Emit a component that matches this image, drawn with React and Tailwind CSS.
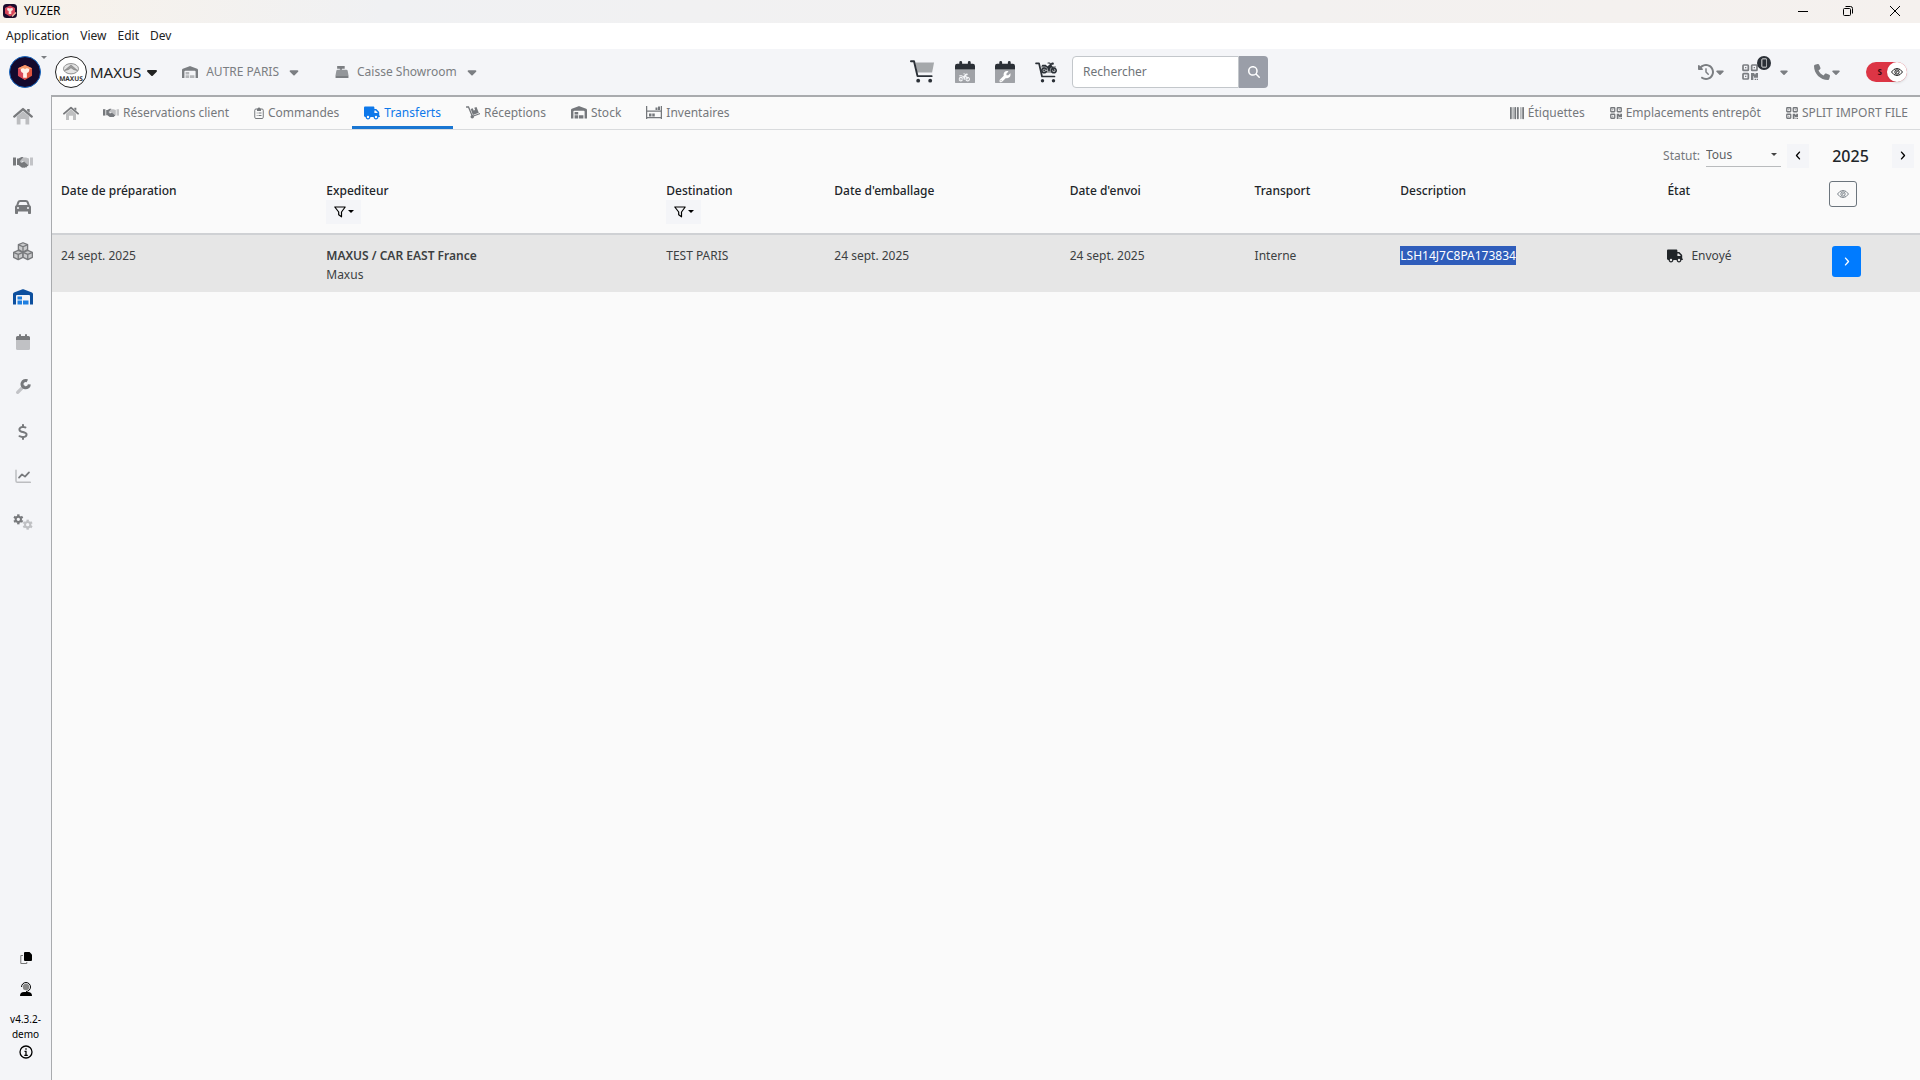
import React, { useState } from 'react';
import {
  FaBarcode,
  FaCar,
  FaCaretDown,
  FaClockRotateLeft,
  FaDollarSign,
  FaMagnifyingGlass,
  FaMotorcycle,
  FaPhone,
  FaTruck,
  FaWrench,
} from 'react-icons/fa6';

/* ---------- Icons ---------- */

function HomeIcon({ className }) {
  return (
    <svg className={className} viewBox="0 0 24 22" fill="none">
      <path d="M4.5 11.5 12 5l7.5 6.5V21H15v-6.5H9V21H4.5z" fill="currentColor" opacity=".45" />
      <path d="M1.5 11.5 12 2.5l10.5 9" stroke="currentColor" strokeWidth="2.8" strokeLinecap="round" strokeLinejoin="round" />
      <path d="M17 2.5h3V7l-3-2.5z" fill="currentColor" />
    </svg>
  );
}

function HandshakeIcon({ className }) {
  return (
    <svg className={className} viewBox="0 0 40 24">
      <path d="M0 3h6v16H0z" fill="currentColor" />
      <path d="M34 3h6v16h-6z" fill="currentColor" opacity=".4" />
      <path d="M18 3h8l6 2v14h-3L20 10l-5 3-3-2z" fill="currentColor" opacity=".45" />
      <path d="M8 5h3l6-3h4l-7 8c1 4 5 4 8 1l8 7c1 2-1 3-2 2 0 3-2 4-3 2-1 2-3 2-4 1-2 1-4 0-5-1l-5-4H8z" fill="currentColor" />
    </svg>
  );
}

function WarehouseIcon({ className, inner = 'currentColor' }) {
  return (
    <svg className={className} viewBox="0 0 40 32">
      <path d="M0 31V10q0-2 2-3L19 .5q1-.5 2 0L38 7q2 1 2 3v21h-6V14q0-2-2-2H8q-2 0-2 2v17z" fill="currentColor" />
      <path d="M9 15h9v6H9zM9 23h9v8H9zM20 23h11v8H20z" fill={inner} />
    </svg>
  );
}

function CubesIcon({ className }) {
  const cube = 'M0-6 6-3.5V3L0 6-6 3v-6.5z';
  const edge = 'M-5.5-3.2 0-.8l5.5-2.4M0-.8V5.5';
  return (
    <svg className={className} viewBox="0 0 26 24" stroke="currentColor" strokeWidth="1.7" strokeLinejoin="round">
      {[[13, 7], [6.8, 17], [19.2, 17]].map(([x, y]) => (
        <g key={x} transform={`translate(${x} ${y})`}>
          <path d={cube} fill="#c9cacc" />
          <path d={edge} fill="none" />
        </g>
      ))}
    </svg>
  );
}

function CalendarIcon({ className, children }) {
  return (
    <svg className={className} viewBox="0 0 28 32">
      <path d="M0 12h28v17q0 3-3 3H3q-3 0-3-3z" fill="currentColor" opacity=".42" />
      <path d="M0 12V7q0-3 3-3h3V2q0-2 2-2t2 2v2h8V2q0-2 2-2t2 2v2h3q3 0 3 3v5z" fill="currentColor" />
      {children}
    </svg>
  );
}

function ChartIcon({ className }) {
  return (
    <svg className={className} viewBox="0 0 24 22" fill="none" strokeLinecap="round" strokeLinejoin="round">
      <path d="M1.5 2v16q0 2 2 2H23" stroke="currentColor" strokeWidth="2.2" opacity=".45" />
      <path d="m6 13 4.5-5 4.5 3.5L21 5" stroke="currentColor" strokeWidth="2.6" />
    </svg>
  );
}

function Gear({ x, y, opacity = 1 }) {
  return (
    <g transform={`translate(${x} ${y})`} opacity={opacity} stroke="currentColor" fill="none">
      <circle r="4" strokeWidth="3" />
      {[0, 60, 120, 180, 240, 300].map((a) => (
        <path key={a} d="M0-4.8V-7.5" strokeWidth="3.6" transform={`rotate(${a})`} />
      ))}
    </g>
  );
}

function GearsIcon({ className }) {
  return (
    <svg className={className} viewBox="0 0 30 24">
      <Gear x={8} y={8} />
      <Gear x={22} y={16} opacity={0.42} />
    </svg>
  );
}

function DuoWrenchIcon({ className }) {
  return (
    <svg className={className} viewBox="0 0 24 24" fill="none" stroke="currentColor">
      <path d="m13 11-9 9" strokeWidth="5" strokeLinecap="round" opacity=".4" />
      <path d="M18.5 2.8a5.5 5.5 0 1 0 3 5.2" strokeWidth="4.5" />
    </svg>
  );
}

function ClipboardIcon({ className }) {
  return (
    <svg className={className} viewBox="0 0 20 24" fill="none" stroke="currentColor" strokeWidth="2">
      <rect x="1.5" y="4" width="17" height="19" rx="2.5" />
      <path d="M6 3.5h1.5a2.5 2.5 0 0 1 5 0H14V8H6z" fill="currentColor" stroke="none" />
      <path d="M5.5 12h1.5M9 12h6M5.5 17h1.5M9 17h6" />
    </svg>
  );
}

function DollyIcon({ className }) {
  return (
    <svg className={className} viewBox="0 0 28 26" fill="none" stroke="currentColor">
      <path d="M1 2h4l7 17M15 20l12-4.5" strokeWidth="2.6" strokeLinecap="round" />
      <circle cx="12.5" cy="21.5" r="3.5" fill="currentColor" stroke="none" />
      <path d="m9.500 6 4-1.500 1.800 4.500 3-1.100L16.500 3.500 21 2l4.500 11.500-11.800 4.300z" fill="currentColor" stroke="none" />
    </svg>
  );
}

function ShelvesIcon({ className }) {
  return (
    <svg className={className} viewBox="0 0 32 26" fill="currentColor">
      <path d="M0 0h2.5v26H0zM29.500 0H32v26h-2.500zM2 9h28v2.500H2zM2 22h28v2.500H2zM19 3h4v5h-4zM24 1h4v7h-4zM6 15h5v6H6zM12.500 15h5v6h-5z" />
    </svg>
  );
}

function QrIcon({ className }) {
  return (
    <svg className={className} viewBox="0 0 24 24" fill="none" stroke="currentColor" strokeWidth="2.600">
      <rect x="1.500" y="1.500" width="8" height="8" rx="1" />
      <rect x="14.500" y="1.500" width="8" height="8" rx="1" />
      <rect x="1.500" y="14.500" width="8" height="8" rx="1" />
      <path d="M4.500 4.500h2v2h-2zM17.500 4.500h2v2h-2zM4.500 17.500h2v2h-2zM13.500 13.500h5v2h2v-2H24v7h-6v-2h-1V24h-3.500zM19 22h2v2h-2zM22 22h2v2h-2z" fill="currentColor" stroke="none" />
    </svg>
  );
}

function RegisterIcon({ className }) {
  return (
    <svg className={className} viewBox="0 0 26 24" fill="currentColor">
      <path d="M4 0h14v5H4zM9 4h4v3H9z" />
      <path d="M5 7h16q2 0 2.500 2L25 17H1l1.500-8Q3 7 5 7z" opacity=".8" />
      <path d="M1 17h24v5q0 2-2 2H3q-2 0-2-2z" />
    </svg>
  );
}

function CartIcon({ className, children }) {
  return (
    <svg className={className} viewBox="0 0 26 24" fill="none">
      <path d="M5.500 2.500H25L23 13H7.500z" fill="#a5a8ab" />
      <path d="M1 1.300h3.200L7.800 16.800H22.500" stroke="currentColor" strokeWidth="2" strokeLinecap="round" strokeLinejoin="round" />
      <circle cx="8.500" cy="21.500" r="2" fill="currentColor" />
      <circle cx="21" cy="21.500" r="2" fill="currentColor" />
      {children}
    </svg>
  );
}

function MotoCartIcon({ className }) {
  return (
    <svg className={className} viewBox="0 0 26 22" fill="none">
      <path d="M6 5h15l-1.500 7H7.500z" fill="#a5a8ab" />
      <path d="M1 2.300h3L7 15.500h12.500" stroke="currentColor" strokeWidth="1.700" strokeLinecap="round" strokeLinejoin="round" />
      <circle cx="7.500" cy="19.800" r="1.700" fill="currentColor" />
      <circle cx="18.500" cy="19.800" r="1.700" fill="currentColor" />
      <FaMotorcycle x="6" y="-1" width="20" height="15" />
    </svg>
  );
}

function EyeIcon({ className }) {
  return (
    <svg className={className} viewBox="0 0 24 16" fill="none" stroke="currentColor" strokeWidth="1.800">
      <path d="M1 8q4.500-7 11-7t11 7q-4.500 7-11 7T1 8z" />
      <circle cx="12" cy="8" r="4.300" />
      <path d="M10 8.500a2.200 2.200 0 0 0 2.500-2.500" />
    </svg>
  );
}

function ChevronIcon({ className, left }) {
  return (
    <svg className={className} viewBox="0 0 8 12" fill="none" stroke="currentColor" strokeWidth="1.800" strokeLinecap="round" strokeLinejoin="round">
      <path d={left ? 'M6 1.500 2 6l4 4.500' : 'M2 1.500 6 6l-4 4.500'} />
    </svg>
  );
}

function FunnelIcon({ className }) {
  return (
    <svg className={className} viewBox="0 0 12 12" fill="none" stroke="currentColor" strokeWidth="1.200" strokeLinejoin="round">
      <path d="M.8 1h10.400L7.500 6v4.800L4.700 8.800V6z" />
    </svg>
  );
}

function SmallCaret({ className }) {
  return (
    <svg className={className} viewBox="0 0 6 4" fill="currentColor">
      <path d="M0 0h6L3 3z" />
    </svg>
  );
}

function YuzerMark({ className }) {
  return (
    <svg className={className} viewBox="0 0 32 32">
      <path d="M16 8.500 23.500 12v8L16 24.500 8.500 20v-8z" fill="#e0553f" />
      <path d="M16 8.500 23.500 12 16 15.500 8.500 12z" fill="#f49a6c" />
      <path d="M8.500 12 16 15.500v9L8.500 20z" fill="#d8485a" />
      <path d="M11.500 13q2.500-2 4.500 0 2-2 4.500 0 .5 3-2.500 4v5h-4v-5q-3-1-2.500-4z" fill="#fff1ea" />
    </svg>
  );
}

/* Title bar version: the mark fills the tile, with a pencil over its corner */
function AppMark({ className }) {
  return (
    <svg className={className} viewBox="0 0 14 14">
      <rect width="14" height="14" rx="3.500" fill="#1c0c2c" />
      <path d="M7 1.500 12 4v5.500L7 12.500 2 9.500V4z" fill="#d8465a" />
      <path d="M4 4.500q1.500-1 3 0 1.500-1 3 0 .2 2-1.700 2.500V10H5.700V7Q3.800 6.500 4 4.500z" fill="#fbe4de" />
      <path d="m9 12.500 4-4" stroke="#f0b8a0" strokeWidth="1.500" />
    </svg>
  );
}

function MaxusMark({ className }) {
  return (
    <svg className={className} viewBox="0 0 32 32">
      <ellipse cx="16" cy="12.500" rx="8" ry="5.500" fill="#e4e4e4" stroke="#8a8a8a" />
      <path d="M9 14.500l7-6 7 6-4-1-3-2-3 2z" fill="#9a9a9a" stroke="#777" strokeWidth=".6" />
      <text x="16" y="26" textAnchor="middle" fontSize="7" fontWeight="700" textRendering="geometricPrecision" fill="#333">MAXUS</text>
    </svg>
  );
}

/* ---------- Data ---------- */

const SIDE_LINKS = [
  { label: 'Accueil', icon: <HomeIcon className="w-5" /> },
  { label: 'Clients', icon: <HandshakeIcon className="w-5" /> },
  { label: 'Véhicules', icon: <FaCar className="size-4" /> },
  { label: 'Produits', icon: <CubesIcon className="w-5" /> },
  { label: 'Entrepôt', icon: <WarehouseIcon className="w-5" inner="#1f7fe0" />, active: true },
  { label: 'Calendrier', icon: <CalendarIcon className="w-[14px]" /> },
  { label: 'Atelier', icon: <DuoWrenchIcon className="size-4" /> },
  { label: 'Finances', icon: <FaDollarSign className="size-4" /> },
  { label: 'Statistiques', icon: <ChartIcon className="w-4" /> },
  { label: 'Paramètres', icon: <GearsIcon className="w-5" /> },
];

const TABS = [
  { label: 'Réservations client', icon: <HandshakeIcon className="w-4" /> },
  { label: 'Commandes', icon: <ClipboardIcon className="w-[10px]" /> },
  { label: 'Transferts', icon: <FaTruck className="size-4" />, active: true },
  { label: 'Réceptions', icon: <DollyIcon className="w-[14px]" /> },
  { label: 'Stock', icon: <WarehouseIcon className="w-4" /> },
  { label: 'Inventaires', icon: <ShelvesIcon className="w-4" /> },
];

const RIGHT_TABS = [
  { label: 'Étiquettes', icon: <FaBarcode className="size-[14px]" /> },
  { label: 'Emplacements entrepôt', icon: <QrIcon className="w-3" /> },
  { label: 'SPLIT IMPORT FILE', icon: <QrIcon className="w-3" /> },
];

const COLUMNS = [
  { label: 'Date de préparation', width: 'w-[14.2%]' },
  { label: 'Expediteur', width: 'w-[18.2%]', filter: true },
  { label: 'Destination', width: 'w-[9%]', filter: true },
  { label: "Date d'emballage", width: 'w-[12.6%]' },
  { label: "Date d'envoi", width: 'w-[9.9%]' },
  { label: 'Transport', width: 'w-[7.8%]' },
  { label: 'Description', width: 'w-[14.3%]' },
  { label: 'État', width: 'w-[8.6%]' },
];

const TRANSFERS = [
  {
    prepared: '24 sept. 2025',
    sender: 'MAXUS / CAR EAST France',
    brand: 'Maxus',
    destination: 'TEST PARIS',
    packed: '24 sept. 2025',
    sent: '24 sept. 2025',
    transport: 'Interne',
    description: 'LSH14J7C8PA173834',
    state: 'Envoyé',
  },
];

/* ---------- Layout ---------- */

function TitleBar() {
  return (
    <div className="flex h-[23px] items-center justify-between bg-linear-to-r from-[#f8f2ea] via-[#f0f1f3] via-20% to-[#f5f1ee] pb-[2px]">
      <div className="flex items-center gap-[7px] pl-[3px]">
        <AppMark className="size-[14px]" />
        <span className="text-xs text-black">YUZER</span>
      </div>
      <div className="flex items-center text-black">
        <button aria-label="Réduire" className="flex w-[45px] justify-center">
          <svg className="size-[10px]" viewBox="0 0 10 10" stroke="currentColor"><path d="M0 5.500h10" /></svg>
        </button>
        <button aria-label="Restaurer" className="flex w-[45px] justify-center">
          <svg className="size-[10px]" viewBox="0 0 10 10" fill="none" stroke="currentColor">
            <rect x=".5" y="2.500" width="7" height="7" rx="1" />
            <path d="M2.500.5h5q2 0 2 2v5" />
          </svg>
        </button>
        <button aria-label="Fermer" className="flex w-[50px] justify-center">
          <svg className="size-[10px]" viewBox="0 0 10 10" stroke="currentColor"><path d="m0 0 10 10M10 0 0 10" /></svg>
        </button>
      </div>
    </div>
  );
}

function MenuBar() {
  return (
    <div className="flex h-[26px] items-center gap-[11px] bg-white px-[6px] text-xs text-[#222]">
      {['Application', 'View', 'Edit', 'Dev'].map((item) => (
        <button key={item}>{item}</button>
      ))}
    </div>
  );
}

function Header() {
  const [query, setQuery] = useState('');

  return (
    <header className="flex h-[46px] items-center pr-[13px] text-[#7b7e82]">
      <div className="flex w-[910px] shrink-0 items-center">
        <button aria-label="YUZER" className="flex w-[55px] items-start pl-[9px]">
          <span className="size-8 rounded-full border border-[#1769c4] bg-[#140a2e]">
            <YuzerMark className="size-[30px]" />
          </span>
          <SmallCaret className="w-[6px]" />
        </button>
        <button className="flex items-center gap-[3px] text-[#222]">
          <span className="size-8 rounded-full border border-[#222] bg-white">
            <MaxusMark className="size-[30px]" />
          </span>
          <span className="text-[15px]">MAXUS</span>
          <FaCaretDown className="size-4" />
        </button>
        <button className="ml-[22px] flex items-center gap-2">
          <WarehouseIcon className="w-4" inner="#b4b6b9" />
          <span className="text-xs">AUTRE PARIS</span>
          <FaCaretDown className="size-[14px]" />
        </button>
        <button className="ml-[34px] flex items-center gap-2">
          <RegisterIcon className="w-[14px]" />
          <span className="text-xs">Caisse Showroom</span>
          <FaCaretDown className="size-[14px]" />
        </button>
      </div>

      <div className="flex items-center gap-5 text-[#2b3037]">
        <button aria-label="Panier"><CartIcon className="w-[25px]" /></button>
        <button aria-label="Réservations moto">
          <CalendarIcon className="w-5">
            <FaMotorcycle x="5" y="15" width="18" height="14" color="#f4f5f8" />
          </CalendarIcon>
        </button>
        <button aria-label="Rendez-vous atelier">
          <CalendarIcon className="w-5">
            <FaWrench x="6" y="14" width="16" height="16" color="#fff" />
          </CalendarIcon>
        </button>
        <button aria-label="Vente moto"><MotoCartIcon className="w-[26px]" /></button>
      </div>

      <form className="ml-[11px] flex h-8" onSubmit={(e) => e.preventDefault()}>
        <input
          type="search"
          aria-label="Rechercher"
          placeholder="Rechercher"
          value={query}
          onChange={(e) => setQuery(e.target.value)}
          className="w-[167px] rounded-l border border-[#c3c7cb] bg-white px-[10px] text-xs placeholder:text-[#6f7479]"
        />
        <button aria-label="Lancer la recherche" className="flex w-[29px] items-center justify-center rounded-r bg-[#9a9ea8] text-white">
          <FaMagnifyingGlass className="size-3" />
        </button>
      </form>

      <div className="ml-auto flex items-center">
        <button aria-label="Historique" className="flex items-center">
          <FaClockRotateLeft className="size-4" />
          <FaCaretDown className="size-3" />
        </button>
        <button aria-label="Scanner" className="relative ml-4 flex items-center gap-5">
          <QrIcon className="w-4" />
          <span className="absolute -top-2 left-[15px] flex size-[14px] items-center justify-center rounded-full bg-[#2b3037]">
            <svg className="h-[10px]" viewBox="0 0 8 12" fill="none" stroke="#fff"><rect x="1" y="1" width="6" height="10" rx="1" /></svg>
          </span>
          <FaCaretDown className="size-3" />
        </button>
        <button aria-label="Téléphone" className="ml-6 flex items-center">
          <FaPhone className="size-4" />
          <FaCaretDown className="size-3" />
        </button>
        <button role="switch" aria-checked="true" aria-label="Visibilité" className="ml-6 flex h-5 w-[41px] items-center justify-end rounded-full bg-[#dc3545]">
          <span className="mr-[5px] text-[8px] font-bold text-[#3a0a10]">S</span>
          <span className="flex size-5 items-center justify-center rounded-full bg-white text-black shadow">
            <EyeIcon className="w-3" />
          </span>
        </button>
      </div>
    </header>
  );
}

function Sidebar() {
  return (
    <aside className="flex w-[51px] shrink-0 flex-col">
      <nav className="-mt-px flex flex-col">
        {SIDE_LINKS.map((link) => (
          <a
            key={link.label}
            href="#"
            aria-label={link.label}
            className={`flex h-[45px] w-[46px] items-center justify-center ${link.active ? 'text-[#0d4f9e]' : 'text-[#77797c]'}`}
          >
            {link.icon}
          </a>
        ))}
      </nav>
      <div className="mt-auto flex flex-col items-center pb-[21px] text-black">
        <button aria-label="Copier">
          <svg className="size-3" viewBox="0 0 12 12">
            <path d="M3 3.500H.8v8h6V10" fill="none" stroke="#777" />
            <path d="M5 0h4.500L12 2.500V8q0 1-1 1H5Q4 9 4 8V1q0-1 1-1z" fill="currentColor" />
          </svg>
        </button>
        <button aria-label="Support" className="mt-[18px]">
          <svg className="w-3" viewBox="0 0 12 14">
            <circle cx="6" cy="5" r="3.200" fill="#888" />
            <path d="M1.500 5a4.500 4.500 0 1 1 4.500 4.500" fill="none" stroke="currentColor" />
            <path d="M0 14q0-4 4-4h4q4 0 4 4z" fill="currentColor" />
          </svg>
        </button>
        <p className="mt-4 text-center text-[10px] leading-[15px]">
          v4.3.2-
          <br />
          demo
        </p>
        <button aria-label="Informations" className="mt-[3px]">
          <svg className="size-[14px]" viewBox="0 0 14 14" fill="none" stroke="currentColor" strokeWidth="1.300">
            <circle cx="7" cy="7" r="6" />
            <path d="M7 3.200v1.600M5.500 6.300H7v4M5.300 10.300h3.500" />
          </svg>
        </button>
      </div>
    </aside>
  );
}

function Tab({ tab }) {
  return (
    <a
      href="#"
      className={`flex items-center gap-1 border-b-3 px-3 pt-[2px] text-xs whitespace-nowrap ${
        tab.active ? 'border-[#1976d2] text-[#0d78ea]' : 'border-transparent text-[#75787c]'
      }`}
    >
      {tab.icon}
      <span>{tab.label}</span>
    </a>
  );
}

function TabBar() {
  return (
    <nav className="flex h-[33px] gap-px border-b border-[#d9dbdd]">
      <a href="#" aria-label="Accueil" className="flex w-[38px] items-center justify-center text-[#77797c]">
        <HomeIcon className="w-4" />
      </a>
      {TABS.map((tab) => <Tab key={tab.label} tab={tab} />)}
      <div className="ml-auto flex gap-px">
        {RIGHT_TABS.map((tab) => <Tab key={tab.label} tab={tab} />)}
      </div>
    </nav>
  );
}

function FilterBar() {
  const [year, setYear] = useState(2025);

  return (
    <div className="flex h-[51px] items-center justify-end pr-[6px] text-xs">
      <label htmlFor="status" className="text-[#75787c]">Statut:</label>
      <div className="relative ml-[6px] flex items-center">
        <select id="status" className="h-[22px] w-[75px] appearance-none border-b border-[#b9bbbd] text-[#5c5f63]">
          <option>Tous</option>
        </select>
        <SmallCaret className="pointer-events-none absolute top-2 right-1 w-[6px] text-[#444]" />
      </div>
      <button aria-label="Année précédente" onClick={() => setYear(year - 1)} className="ml-[6px] flex h-6 w-[22px] items-center justify-center bg-[#f4f5f8] text-black">
        <ChevronIcon left className="w-[6px]" />
      </button>
      <span className="w-[83px] text-center text-base font-medium text-[#212529]">{year}</span>
      <button aria-label="Année suivante" onClick={() => setYear(year + 1)} className="flex h-6 w-[22px] items-center justify-center bg-[#f4f5f8] text-black">
        <ChevronIcon className="w-[6px]" />
      </button>
    </div>
  );
}

function TransferTable() {
  return (
    <table className="w-full table-fixed text-left text-xs leading-[19px] text-[#3c3f42]">
      <thead>
        <tr className="border-b-2 border-[#cfd1d4] align-top text-[#212529]">
          {COLUMNS.map((col) => (
            <th key={col.label} className={`pr-2 pb-[9px] pl-[9px] font-medium ${col.width}`}>
              {col.label}
              {col.filter && (
                <button aria-label={`Filtrer ${col.label}`} className="flex h-6 w-[35px] items-center justify-center gap-[2px] bg-[#f4f5f8] text-black">
                  <FunnelIcon className="w-3" />
                  <SmallCaret className="w-[6px]" />
                </button>
              )}
            </th>
          ))}
          <th className="pl-[10px]">
            <button aria-label="Colonnes" className="flex h-[26px] w-7 items-center justify-center rounded-[3px] border border-[#6c757d] text-[#6c757d]">
              <EyeIcon className="w-3" />
            </button>
          </th>
        </tr>
      </thead>
      <tbody>
        {TRANSFERS.map((row) => (
          <tr key={row.description} className="h-[58px] bg-[#e6e6e6] align-top">
            <td className="pt-[11px] pl-[9px]">{row.prepared}</td>
            <td className="pt-[11px] pl-[9px]">
              <div className="font-semibold">{row.sender}</div>
              <div>{row.brand}</div>
            </td>
            <td className="pt-[11px] pl-[9px]">{row.destination}</td>
            <td className="pt-[11px] pl-[9px]">{row.packed}</td>
            <td className="pt-[11px] pl-[9px]">{row.sent}</td>
            <td className="pt-[11px] pl-[9px]">{row.transport}</td>
            <td className="pt-[11px] pl-[9px]">
              <span className="inline-block bg-[#2f5dbb] text-white">{row.description}</span>
            </td>
            <td className="pt-[11px] pl-[9px]">
              <div className="flex items-center gap-2">
                <FaTruck className="size-4 text-[#212529]" />
                {row.state}
              </div>
            </td>
            <td className="pt-[11px] pl-[13px]">
              <button aria-label="Ouvrir" className="flex h-[31px] w-[29px] items-center justify-center rounded-[3px] bg-[#007bff] text-white">
                <ChevronIcon className="w-[6px]" />
              </button>
            </td>
          </tr>
        ))}
      </tbody>
    </table>
  );
}

export default function App() {
  return (
    <div className="flex min-h-screen flex-col bg-[#f4f5f8] font-['Noto_Sans','Segoe_UI',sans-serif]">
      <TitleBar />
      <MenuBar />
      <Header />
      <div className="flex grow">
        <Sidebar />
        <main className="min-w-0 grow border-t-2 border-l border-[#a9abae] bg-[#fafafa]">
          <TabBar />
          <FilterBar />
          <TransferTable />
        </main>
      </div>
    </div>
  );
}
